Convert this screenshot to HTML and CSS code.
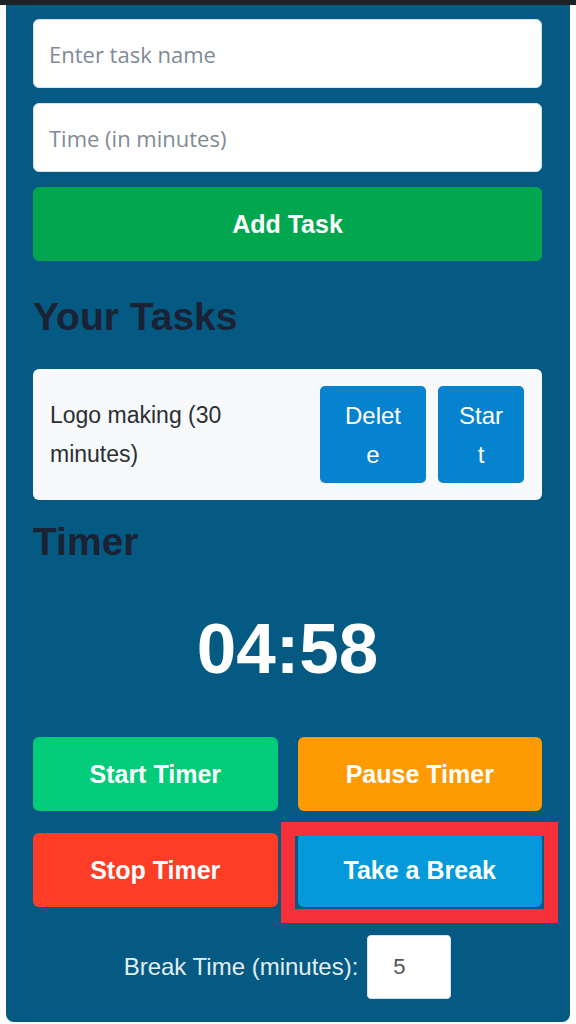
FILE: index.html
```html
<!DOCTYPE html>
<html lang="en">
<head>
  <meta charset="UTF-8">
  <meta name="viewport" content="width=device-width, initial-scale=1.0">
  <title>Task Timer</title>
  <link rel="stylesheet" href="styles.css">
</head>
<body>
  <div class="top-bar"></div>
  <div class="app-container">
    <input type="text" class="text-input" placeholder="Enter task name">
    <input type="number" class="text-input" placeholder="Time (in minutes)">
    <button class="btn add-btn">Add Task</button>

    <h2 class="section-title tasks-title">Your Tasks</h2>
    <div class="task-list">
      <div class="task-item">
        <span class="task-name">Logo making (30 minutes)</span>
        <div class="task-actions">
          <button class="task-btn delete-btn">Delete</button>
          <button class="task-btn start-btn">Start</button>
        </div>
      </div>
    </div>

    <h2 class="section-title timer-title">Timer</h2>
    <div class="timer-display">04:58</div>

    <div class="timer-controls">
      <button class="btn start-timer">Start Timer</button>
      <button class="btn pause-timer">Pause Timer</button>
      <button class="btn stop-timer">Stop Timer</button>
      <div class="highlight-wrap">
        <button class="btn break-btn">Take a Break</button>
        <span class="highlight-box"></span>
      </div>
    </div>

    <div class="break-row">
      <label for="breakTime">Break Time (minutes):</label>
      <input type="number" id="breakTime" class="break-input" value="5">
    </div>
  </div>
</body>
</html>
```

FILE: styles.css
```css
body {
  margin: 0;
  padding: 0;
  background-color: #FFFFFF;
  font-family: "Liberation Sans", Arial, sans-serif;
}

.top-bar {
  height: 5px;
  background-color: #1E2225;
}

.app-container {
  margin: 0 6px;
  padding: 14px 28px 23px 27px;
  background-color: #045A82;
  border-radius: 0 0 8px 8px;
  display: flex;
  flex-direction: column;
}

.text-input {
  height: 69px;
  box-sizing: border-box;
  margin: 0 0 15px;
  padding: 0 15px;
  border: 1px solid #D6E2EA;
  border-radius: 6px;
  background-color: #FFFFFF;
  font-family: "Open Sans", sans-serif;
  font-size: 22px;
  color: #333333;
  outline: none;
}

.text-input::placeholder {
  color: #7F8A97;
}

.btn {
  height: 74px;
  border: none;
  border-radius: 6px;
  color: #FFFFFF;
  font-family: "Liberation Sans", Arial, sans-serif;
  font-size: 25px;
  font-weight: bold;
  cursor: pointer;
}

.add-btn {
  background-color: #00A74F;
}

.section-title {
  margin: 0;
  color: #1A2233;
  font-size: 39px;
  font-weight: bold;
  line-height: 44px;
}

.tasks-title {
  margin-top: 34px;
}

.task-list {
  margin-top: 30px;
}

.task-item {
  display: flex;
  align-items: center;
  justify-content: space-between;
  padding: 17px 18px 17px 17px;
  background-color: #F7F9FB;
  border-radius: 6px;
}

.task-name {
  width: 230px;
  font-size: 23px;
  line-height: 39px;
  color: #2B2F33;
}

.task-actions {
  display: flex;
  gap: 12px;
}

.task-btn {
  height: 97px;
  padding: 0 20px;
  border: none;
  border-radius: 5px;
  background-color: #0683CF;
  color: #FFFFFF;
  font-family: "Liberation Sans", Arial, sans-serif;
  font-size: 24px;
  line-height: 39px;
  word-break: break-all;
}

.delete-btn {
  width: 106px;
}

.start-btn {
  width: 86px;
}

.timer-title {
  margin-top: 20px;
}

.timer-display {
  margin: 43px 0 46px;
  text-align: center;
  color: #FFFFFF;
  font-size: 71px;
  font-weight: bold;
  line-height: 84px;
}

.timer-controls {
  display: grid;
  grid-template-columns: 1fr 1fr;
  column-gap: 20px;
  row-gap: 22px;
}

.start-timer {
  background-color: #02CC79;
}

.pause-timer {
  background-color: #FE9A03;
}

.stop-timer {
  background-color: #FE3D26;
}

.highlight-wrap {
  position: relative;
  display: flex;
  flex-direction: column;
}

.break-btn {
  background-color: #0399DB;
}

.highlight-box {
  position: absolute;
  left: -17px;
  top: -11px;
  right: -16px;
  bottom: -16px;
  border: 14px solid #F5303A;
  pointer-events: none;
}

.break-row {
  display: flex;
  align-items: center;
  justify-content: center;
  gap: 9px;
  margin-top: 28px;
  color: #E2EEF5;
  font-size: 24px;
}

.break-input {
  width: 84px;
  height: 64px;
  box-sizing: border-box;
  padding: 0 0 0 25px;
  border: 1px solid #D6E2EA;
  border-radius: 4px;
  background-color: #FFFFFF;
  font-family: "Liberation Sans", Arial, sans-serif;
  font-size: 22px;
  color: #555555;
  outline: none;
}

.break-input::-webkit-inner-spin-button {
  -webkit-appearance: none;
}
```
